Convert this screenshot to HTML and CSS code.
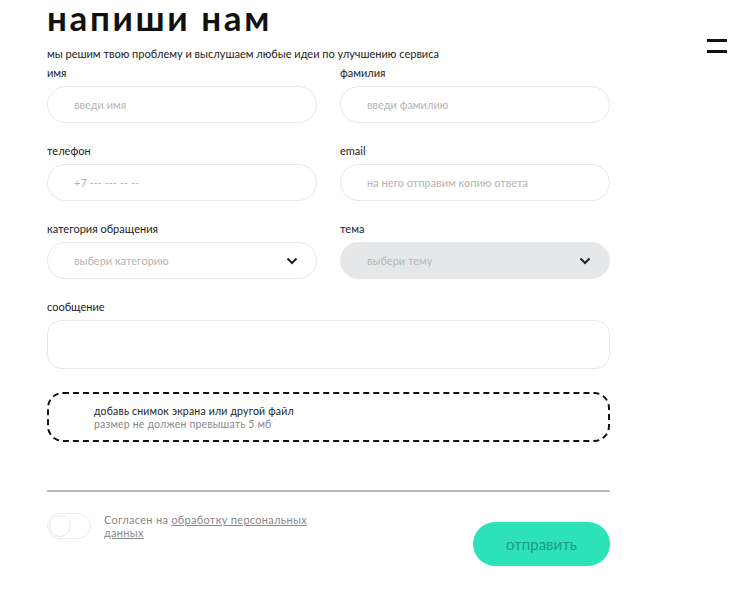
FILE: index.html
```html
<!DOCTYPE html>
<html>
  <head>
    <meta charset="UTF-8">
    <title>напиши нам</title>
    <link rel="stylesheet" href="styles.css">
  </head>
  <body>
    <button class="menu-btn" type="button" aria-label="меню">
      <span></span>
      <span></span>
    </button>
    <div class="container">
      <h1>напиши нам</h1>
      <p class="lead">мы решим твою проблему и выслушаем любые идеи по улучшению сервиса</p>
      <form id="feedbackForm">
        <div class="grid">
          <div class="field">
            <label for="firstName">имя</label>
            <input type="text" id="firstName" placeholder="введи имя">
          </div>
          <div class="field">
            <label for="lastName">фамилия</label>
            <input type="text" id="lastName" placeholder="введи фамилию">
          </div>
          <div class="field">
            <label for="phone">телефон</label>
            <input type="tel" id="phone" placeholder="+7 --- --- -- --">
          </div>
          <div class="field">
            <label for="email">email</label>
            <input type="email" id="email" placeholder="на него отправим копию ответа">
          </div>
          <div class="field">
            <label>категория обращения</label>
            <div class="select">
              <span>выбери категорию</span>
              <svg width="12" height="8" viewBox="0 0 12 8"><path d="M1.5 1.5 L6 6 L10.5 1.5" fill="none" stroke="#222" stroke-width="2"/></svg>
            </div>
          </div>
          <div class="field">
            <label>тема</label>
            <div class="select disabled">
              <span>выбери тему</span>
              <svg width="12" height="8" viewBox="0 0 12 8"><path d="M1.5 1.5 L6 6 L10.5 1.5" fill="none" stroke="#222" stroke-width="2"/></svg>
            </div>
          </div>
          <div class="field wide">
            <label for="message">сообщение</label>
            <textarea id="message"></textarea>
          </div>
        </div>

        <div class="dropzone">
          <div class="drop-title">добавь снимок экрана или другой файл</div>
          <div class="drop-hint">размер не должен превышать 5 мб</div>
        </div>

        <hr class="divider">

        <div class="footer">
          <div class="agree">
            <span class="toggle"><span class="knob"></span></span>
            <div class="agree-text">
              <div>Согласен на <a href="#">обработку персональных</a></div>
              <div><a href="#">данных</a></div>
            </div>
          </div>
          <button type="submit" class="submit">отправить</button>
        </div>
      </form>
    </div>
  </body>
</html>
```

FILE: styles.css
```css
body {
  background-color: #fff;
  color: #222;
  font-family: Lato, "Noto Sans", sans-serif;
  margin: 0;
  padding: 0;
}

.container {
  margin-left: 47px;
  width: 563px;
}

h1 {
  font-size: 35px;
  font-weight: 700;
  letter-spacing: 2.6px;
  line-height: 34px;
  margin: 0;
  color: #111;
}

.lead {
  font-size: 11px;
  margin: 13px 0 0;
  color: #222;
}

.menu-btn {
  background: none;
  border: none;
  cursor: pointer;
  display: flex;
  flex-direction: column;
  gap: 8px;
  padding: 0;
  position: absolute;
  right: 25px;
  top: 39px;
  width: 20px;
}

.menu-btn span {
  background-color: #111;
  display: block;
  height: 3px;
  width: 20px;
}

.grid {
  display: grid;
  grid-template-columns: 270px 270px;
  column-gap: 23px;
  row-gap: 21px;
  margin-top: 6px;
}

.field.wide {
  grid-column: 1 / 3;
}

label {
  display: block;
  font-size: 11px;
  line-height: 14px;
  margin-bottom: 6px;
  color: #222;
}

input,
textarea,
.select {
  border: 1px solid #e8e8e8;
  border-radius: 19px;
  box-sizing: border-box;
  font-family: inherit;
  font-size: 11px;
  height: 37px;
  padding: 0 26px;
  width: 100%;
  color: #222;
  outline: none;
}

input::placeholder {
  color: #b5b5b5;
}

textarea {
  display: block;
  height: 49px;
  resize: none;
  border-radius: 14px;
}

.select {
  align-items: center;
  display: flex;
  justify-content: space-between;
  color: #b5b5b5;
  padding-right: 18px;
}

.select.disabled {
  background-color: #e6e7e9;
  border-color: #e6e7e9;
}

.dropzone {
  border: 2px dashed #111;
  border-radius: 16px;
  box-sizing: border-box;
  height: 50px;
  margin-top: 23px;
  padding: 11px 45px 0;
}

.drop-title {
  font-size: 10.5px;
  line-height: 13px;
  color: #222;
  letter-spacing: 0.2px;
}

.drop-hint {
  font-size: 10.5px;
  line-height: 13px;
  color: #8a8a8a;
  letter-spacing: 0.2px;
}

.divider {
  border: none;
  border-top: 2px solid #b7b9bd;
  margin: 48px 0 0;
}

.footer {
  align-items: flex-start;
  display: flex;
  justify-content: space-between;
  margin-top: 21px;
}

.agree {
  align-items: flex-start;
  display: flex;
  gap: 13px;
}

.toggle {
  border: 1px solid #ececec;
  border-radius: 13px;
  box-sizing: border-box;
  display: block;
  height: 26px;
  padding: 1px;
  width: 44px;
}

.knob {
  border: 1px solid #e8e8e8;
  border-radius: 50%;
  box-sizing: border-box;
  display: block;
  height: 22px;
  width: 22px;
}

.agree-text {
  color: #8a8a8a;
  font-size: 11px;
  letter-spacing: 0.3px;
  line-height: 13px;
}

.agree-text a {
  color: #8a8a8a;
}

.submit {
  background-color: #2de1b9;
  border: none;
  border-radius: 22px;
  color: #1d9b80;
  cursor: pointer;
  font-family: inherit;
  font-size: 15px;
  height: 44px;
  margin-top: 9px;
  width: 137px;
}
```
